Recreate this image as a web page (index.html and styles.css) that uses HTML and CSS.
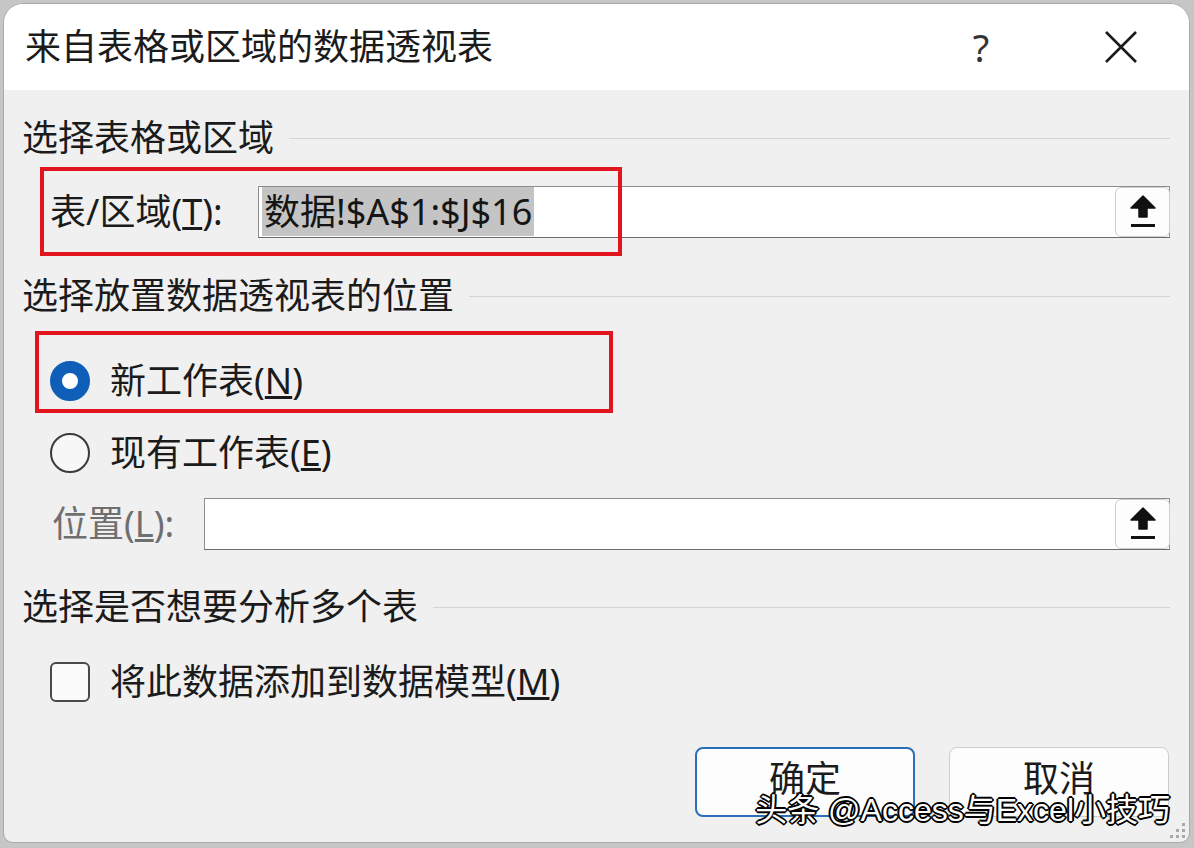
FILE: index.html
```html
<!DOCTYPE html>
<html lang="zh-CN">
<head>
    <meta charset="UTF-8">
    <meta name="viewport" content="width=device-width, initial-scale=1.0">
    <title>来自表格或区域的数据透视表</title>
    <link rel="stylesheet" href="styles.css">
</head>
<body>
    <div class="dialog">
        <div class="titlebar">
            <span class="title">来自表格或区域的数据透视表</span>
            <span class="help">?</span>
            <span class="close">
                <svg width="34" height="34" viewBox="0 0 34 34">
                    <path d="M2 2 L32 32 M32 2 L2 32" stroke="#1b1b1b" stroke-width="2.6" fill="none"/>
                </svg>
            </span>
        </div>

        <div class="content">
            <div class="group-head">
                <span>选择表格或区域</span>
                <i class="rule"></i>
            </div>

            <div class="field-row row-table">
                <label class="field-label label-table">表/区域(<u>T</u>):</label>
                <div class="textbox">
                    <span class="value"><span class="sel">数据!$A$1:$J$16</span></span>
                    <button class="pick">
                        <svg width="26" height="34" viewBox="0 0 26 34">
                            <path d="M13 1 L25 13 L17 13 L17 22 L9 22 L9 13 L1 13 Z" fill="#111" stroke="#111" stroke-width="1.5" stroke-linejoin="round"/>
                            <rect x="1" y="29" width="24" height="3" fill="#111"/>
                        </svg>
                    </button>
                </div>
                <div class="mark mark-table"></div>
            </div>

            <div class="group-head head-place">
                <span>选择放置数据透视表的位置</span>
                <i class="rule"></i>
            </div>

            <div class="option-row row-new">
                <span class="radio checked"></span>
                <span class="option-text">新工作表(<u>N</u>)</span>
                <div class="mark mark-new"></div>
            </div>

            <div class="option-row row-existing">
                <span class="radio"></span>
                <span class="option-text">现有工作表(<u>E</u>)</span>
            </div>

            <div class="field-row row-location">
                <label class="field-label label-location disabled">位置(<u>L</u>):</label>
                <div class="textbox">
                    <span class="value"></span>
                    <button class="pick">
                        <svg width="26" height="34" viewBox="0 0 26 34">
                            <path d="M13 1 L25 13 L17 13 L17 22 L9 22 L9 13 L1 13 Z" fill="#111" stroke="#111" stroke-width="1.5" stroke-linejoin="round"/>
                            <rect x="1" y="29" width="24" height="3" fill="#111"/>
                        </svg>
                    </button>
                </div>
            </div>

            <div class="group-head head-multi">
                <span>选择是否想要分析多个表</span>
                <i class="rule"></i>
            </div>

            <div class="option-row row-model">
                <span class="checkbox"></span>
                <span class="option-text">将此数据添加到数据模型(<u>M</u>)</span>
            </div>

            <div class="buttons">
                <button class="btn btn-default">确定</button>
                <button class="btn">取消</button>
            </div>
        </div>

        <div class="watermark">头条 @Access与Excel小技巧</div>

        <svg class="grip" width="18" height="18" viewBox="0 0 18 18">
            <rect x="13" y="1" width="3" height="3" fill="#a8a8a8"/>
            <rect x="7" y="7" width="3" height="3" fill="#a8a8a8"/>
            <rect x="13" y="7" width="3" height="3" fill="#a8a8a8"/>
            <rect x="1" y="13" width="3" height="3" fill="#a8a8a8"/>
            <rect x="7" y="13" width="3" height="3" fill="#a8a8a8"/>
            <rect x="13" y="13" width="3" height="3" fill="#a8a8a8"/>
        </svg>
    </div>
</body>
</html>
```

FILE: styles.css
```css
* {
    margin: 0;
    padding: 0;
    box-sizing: border-box;
}

body {
    background-color: #c6c6c6;
    font-family: "Noto Sans", "Noto Sans CJK SC", sans-serif;
    color: #1b1b1b;
    width: 1194px;
    height: 848px;
    overflow: hidden;
}

.dialog {
    position: relative;
    margin: 3px 4px 0 3px;
    height: 840px;
    background-color: #f0f0f0;
    border: 1px solid #a9a9a9;
    border-radius: 20px 20px 10px 10px;
    overflow: hidden;
}

/* title bar */
.titlebar {
    height: 86px;
    background-color: #ffffff;
    display: flex;
    align-items: center;
    padding-left: 21px;
    padding-right: 38px;
}

.title {
    font-size: 36px;
    line-height: 40px;
    flex: 1;
}

.help {
    width: 60px;
    text-align: center;
    font-size: 38px;
    line-height: 40px;
    color: #333;
    margin-right: 80px;
}

.close {
    width: 60px;
    display: flex;
    justify-content: center;
}

/* body */
.content {
    padding: 0 19px 0 18px;
}

.group-head {
    display: flex;
    align-items: center;
    height: 44px;
    margin-top: 26px;
}

.group-head span {
    font-size: 36px;
    line-height: 44px;
}

.rule {
    flex: 1;
    height: 1px;
    background-color: #d4d4d4;
    margin-left: 15px;
}

.head-place {
    margin-top: 36px;
}

.head-multi {
    margin-top: 35px;
}

.field-row {
    position: relative;
    display: flex;
    align-items: center;
    height: 52px;
    padding-left: 28px;
}

.row-table {
    margin-top: 26px;
}

.row-location {
    margin-top: 25px;
    padding-left: 30px;
}

.field-label {
    font-size: 36px;
    line-height: 40px;
}

.label-table {
    width: 208px;
}

.label-location {
    width: 152px;
}

.field-label.disabled {
    color: #6f6f6f;
}

.textbox {
    flex: 1;
    height: 52px;
    display: flex;
    align-items: center;
    background-color: #ffffff;
    border: 1px solid #8d8d8d;
    border-bottom-color: #6a6a6a;
}

.value {
    flex: 1;
    padding-left: 3px;
}

.sel {
    background-color: #c4c4c4;
    font-size: 36px;
    line-height: 38px;
    padding: 0 2px;
    color: #151515;
}

.pick {
    width: 55px;
    height: 50px;
    margin-right: -1px;
    background-color: #fdfdfd;
    border: 1px solid #cfcfcf;
    border-radius: 6px;
    display: flex;
    align-items: center;
    justify-content: center;
}

.option-row {
    position: relative;
    display: flex;
    align-items: center;
    height: 40px;
    padding-left: 28px;
}

.row-new {
    margin-top: 43px;
}

.row-existing {
    margin-top: 32px;
}

.row-model {
    margin-top: 33px;
}

.option-text {
    font-size: 36px;
    line-height: 40px;
    margin-left: 20px;
}

.radio {
    width: 40px;
    height: 40px;
    border-radius: 50%;
    border: 2px solid #3a3a3a;
    background-color: #f7f7f7;
}

.radio.checked {
    border: 12px solid #0f5fb8;
    background-color: #ffffff;
}

.checkbox {
    width: 40px;
    height: 40px;
    border: 2px solid #4a4a4a;
    border-radius: 6px;
    background-color: #fbfbfb;
}

/* red annotation frames */
.mark {
    position: absolute;
    border: 4px solid #e2141e;
}

.mark-table {
    left: 18px;
    top: -19px;
    width: 582px;
    height: 89px;
}

.mark-new {
    left: 13px;
    top: -30px;
    width: 578px;
    height: 82px;
}

.buttons {
    display: flex;
    justify-content: flex-end;
    gap: 34px;
    margin-top: 45px;
    padding-right: 1px;
}

.btn {
    width: 220px;
    height: 70px;
    background-color: #fdfdfd;
    border: 1px solid #cdcdcd;
    border-radius: 8px;
    font-family: "Noto Sans", "Noto Sans CJK SC", sans-serif;
    font-size: 36px;
    line-height: 40px;
    color: #1b1b1b;
    padding-bottom: 6px;
}

.btn-default {
    border: 2px solid #2a6fb8;
}

.watermark {
    position: absolute;
    right: 19px;
    bottom: 14px;
    font-family: "Liberation Sans", "Noto Sans CJK SC", sans-serif;
    font-size: 32px;
    line-height: 36px;
    color: #ffffff;
    text-shadow: -2px 0 0 #000, 2px 0 0 #000, 0 -2px 0 #000, 0 2px 0 #000,
        -1px -1px 0 #000, 1px 1px 0 #000, -1px 1px 0 #000, 1px -1px 0 #000;
}

.grip {
    position: absolute;
    right: 2px;
    bottom: 2px;
}
```
